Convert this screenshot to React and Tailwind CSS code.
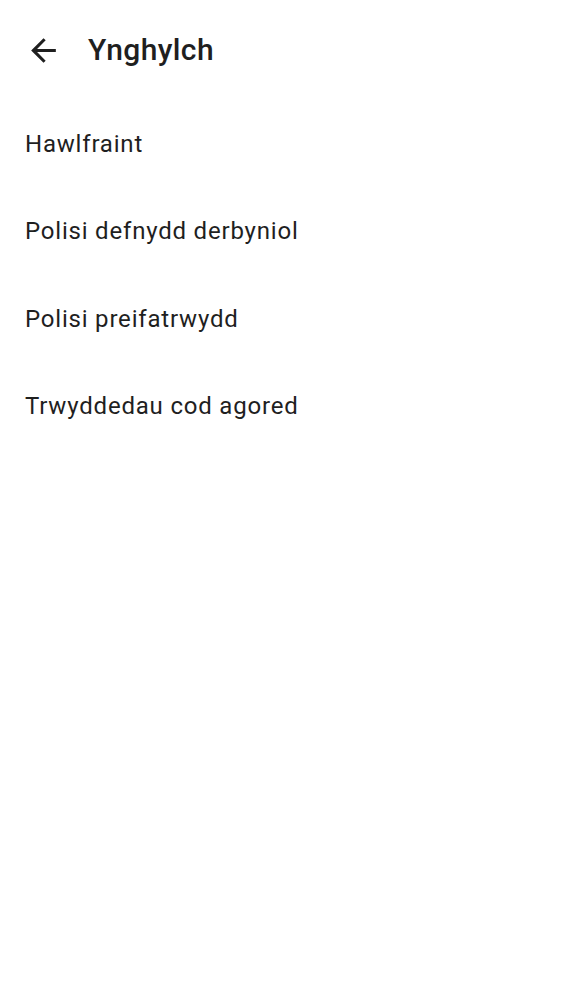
export default function App() {
  const items = ["Hawlfraint", "Polisi defnydd derbyniol", "Polisi preifatrwydd", "Trwyddedau cod agored"];
  return (
    <div className="w-[562px] h-[1000px] bg-white text-[#1f1f1f]" style={{ fontFamily: "Roboto, sans-serif" }}>
      <div className="h-[100px] flex items-center pl-[25px]">
        <svg width="37" height="37" viewBox="0 0 24 24" className="shrink-0">
          <path d="M20 11H7.83l5.59-5.59L12 4l-8 8 8 8 1.41-1.41L7.83 13H20v-2z" fill="#1f1f1f" />
        </svg>
        <span className="ml-[26px] text-[30px] font-medium leading-none tracking-[0.4px]">Ynghylch</span>
      </div>
      <div className="flex flex-col">
        {items.map((t) => (
          <div key={t} className="h-[87.5px] flex items-center pl-[25px] text-[24px] leading-none tracking-[0.8px]">
            {t}
          </div>
        ))}
      </div>
    </div>
  );
}
